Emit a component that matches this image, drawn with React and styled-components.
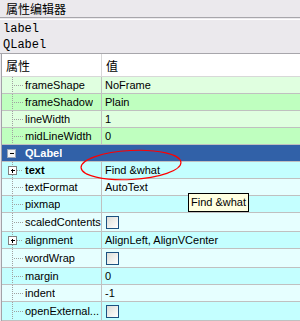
import React from 'react';
import styled, { createGlobalStyle } from 'styled-components';

const GlobalStyle = createGlobalStyle`
  html, body { margin: 0; padding: 0; }
  body {
    width: 300px;
    height: 321px;
    overflow: hidden;
    background: #ebe9ed;
    font-family: "Liberation Sans", Arial, sans-serif;
  }
`;

const Panel = styled.div`
  position: relative;
  width: 300px;
  height: 321px;
  display: flex;
  flex-direction: column;
  background: #ebe9ed;
  overflow: hidden;
`;

const TitleBar = styled.div`
  height: 17px;
  line-height: 17px;
  padding-left: 6px;
  font-family: "Noto Sans CJK SC", sans-serif;
  font-size: 12px;
  color: #000;
  border-bottom: 1px solid #a7a6ab;
`;

const InfoBox = styled.div`
  margin-top: 1px;
  height: 33px;
  padding: 0 3px;
  border-top: 1px solid #ffffff;
  border-bottom: 1px solid #a7a6ab;
  display: flex;
  flex-direction: column;
  justify-content: center;
`;

const InfoLine = styled.div`
  height: 16px;
  line-height: 16px;
  font-family: "Liberation Mono", monospace;
  font-size: 12px;
  color: #000;
`;

const Tree = styled.div`
  display: flex;
  flex-direction: column;
  background: #fff;
  flex: 1;
  margin-left: 1px;
  border-left: 1px solid #a3a2a8;
`;

const HeaderRow = styled.div`
  display: grid;
  grid-template-columns: 99px 1fr;
  height: 22px;
  border-bottom: 1px solid #d8d8d8;
  background: #fff;
`;

const HeaderCell = styled.div`
  display: flex;
  align-items: center;
  padding-left: ${p => p.$pad}px;
  font-family: "Noto Sans CJK SC", sans-serif;
  font-size: 12px;
  color: #000;
  border-left: ${p => (p.$divider ? '1px solid #d8d8d8' : 'none')};
`;

const Row = styled.div`
  display: grid;
  grid-template-columns: 99px 1fr;
  height: ${p => p.$h}px;
  background: ${p => p.$bg};
  border-bottom: 1px solid #c0c0c0;
`;

const GroupRow = styled.div`
  display: flex;
  align-items: center;
  height: 16px;
  background: #3161a8;
  border-bottom: 1px solid #c0c0c0;
`;

const NameCell = styled.div`
  display: flex;
  align-items: stretch;
  overflow: hidden;
  white-space: nowrap;
`;

const Name = styled.span`
  display: flex;
  align-items: center;
  font-size: 11px;
  font-weight: ${p => (p.$bold ? 700 : 400)};
  color: ${p => p.$color || '#000'};
  overflow: hidden;
`;

const ValueCell = styled.div`
  display: flex;
  align-items: center;
  padding-left: 3px;
  border-left: 1px solid #c0c0c0;
  font-size: 11px;
  color: #000;
  white-space: nowrap;
  overflow: hidden;
`;

const BranchSvg = styled.svg`
  flex: none;
  width: 23px;
  display: block;
`;

const CheckBox = styled.span`
  width: 11px;
  height: 11px;
  margin-left: 1px;
  border: 1px solid #1c5180;
  background: linear-gradient(135deg, #dcdcd7 0%, #f2f2ef 60%, #ffffff 100%);
`;

const EllipseMark = styled.svg`
  position: absolute;
  left: 78px;
  top: 147px;
  width: 106px;
  height: 36px;
  pointer-events: none;
`;

const Tooltip = styled.div`
  position: absolute;
  left: 188px;
  top: 193px;
  height: 17px;
  line-height: 17px;
  padding: 0 2px;
  background: #ffffe1;
  border: 1px solid #000;
  font-size: 11px;
  color: #000;
  white-space: nowrap;
`;

const Branch = ({ kind, h }) => {
  const mid = Math.floor(h / 2) + 0.5;
  if (kind === 'group') {
    return (
      <BranchSvg height={h} viewBox={`0 0 23 ${h}`} shapeRendering="crispEdges">
        <rect x="5.5" y={mid - 4.5} width="8" height="8" fill="#f4f4f4" stroke="#9aa6b8" />
        <line x1="7.5" y1={mid - 0.5} x2="12" y2={mid - 0.5} stroke="#000" />
      </BranchSvg>
    );
  }
  if (kind === 'expand') {
    return (
      <BranchSvg height={h} viewBox={`0 0 23 ${h}`} shapeRendering="crispEdges">
        <line x1="10.5" y1="0" x2="10.5" y2={mid - 4.5} stroke="#a0a0a0" strokeDasharray="1 1" />
        <line x1="10.5" y1={mid + 4.5} x2="10.5" y2={h} stroke="#a0a0a0" strokeDasharray="1 1" />
        <line x1="15" y1={mid} x2="21" y2={mid} stroke="#a0a0a0" strokeDasharray="1 1" />
        <rect x="6.5" y={mid - 4} width="8" height="8" fill="#fff" stroke="#808080" />
        <line x1="8.5" y1={mid} x2="13" y2={mid} stroke="#000" />
        <line x1="10.5" y1={mid - 2} x2="10.5" y2={mid + 2.5} stroke="#000" />
      </BranchSvg>
    );
  }
  return (
    <BranchSvg height={h} viewBox={`0 0 23 ${h}`} shapeRendering="crispEdges">
      <line x1="10.5" y1="0" x2="10.5" y2={h} stroke="#a0a0a0" strokeDasharray="1 1" />
      <line x1="12" y1={mid} x2="21" y2={mid} stroke="#a0a0a0" strokeDasharray="1 1" />
    </BranchSvg>
  );
};

const GREEN_L = '#e0ffe0';
const GREEN_D = '#bfffbf';
const CYAN_L = '#e6ffff';
const CYAN_D = '#c4ffff';

const frameRows = [
  { name: 'frameShape', value: 'NoFrame', bg: GREEN_L },
  { name: 'frameShadow', value: 'Plain', bg: GREEN_D },
  { name: 'lineWidth', value: '1', bg: GREEN_L },
  { name: 'midLineWidth', value: '0', bg: GREEN_D },
];

const labelRows = [
  { name: 'text', value: 'Find &what', bg: CYAN_D, bold: true, expand: true },
  { name: 'textFormat', value: 'AutoText', bg: CYAN_L },
  { name: 'pixmap', value: '', bg: CYAN_D },
  { name: 'scaledContents', check: true, bg: CYAN_L },
  { name: 'alignment', value: 'AlignLeft, AlignVCenter', bg: CYAN_D, expand: true },
  { name: 'wordWrap', check: true, bg: CYAN_L },
  { name: 'margin', value: '0', bg: CYAN_D },
  { name: 'indent', value: '-1', bg: CYAN_L },
  { name: 'openExternal...', check: true, bg: CYAN_D },
];

const PropRow = ({ r }) => {
  const h = r.check ? 18 : 16;
  return (
    <Row $bg={r.bg} $h={h}>
      <NameCell>
        <Branch kind={r.expand ? 'expand' : 'leaf'} h={h} />
        <Name $bold={r.bold}>{r.name}</Name>
      </NameCell>
      <ValueCell>{r.check ? <CheckBox /> : r.value}</ValueCell>
    </Row>
  );
};

export default function App() {
  return (
    <>
      <GlobalStyle />
      <Panel>
        <TitleBar>属性编辑器</TitleBar>
        <InfoBox>
          <InfoLine>label</InfoLine>
          <InfoLine>QLabel</InfoLine>
        </InfoBox>
        <Tree>
          <HeaderRow>
            <HeaderCell $pad={4}>属性</HeaderCell>
            <HeaderCell $pad={4} $divider>值</HeaderCell>
          </HeaderRow>
          {frameRows.map(r => <PropRow key={r.name} r={r} />)}
          <GroupRow>
            <Branch kind="group" h={16} />
            <Name $bold $color="#ffffff">QLabel</Name>
          </GroupRow>
          {labelRows.map(r => <PropRow key={r.name} r={r} />)}
        </Tree>
        <EllipseMark viewBox="0 0 106 36">
          <ellipse cx="53" cy="18" rx="50" ry="14.5" fill="none" stroke="#ff0000" strokeWidth="1.2" transform="rotate(-3 53 18)" />
        </EllipseMark>
        <Tooltip>Find &amp;what</Tooltip>
      </Panel>
    </>
  );
}
